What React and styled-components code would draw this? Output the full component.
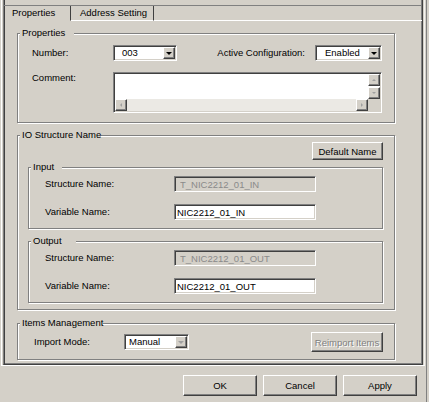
import React from 'react';
import styled, { createGlobalStyle, css } from 'styled-components';

const GlobalStyle = createGlobalStyle`
  html, body {
    margin: 0;
    padding: 0;
    background: #d4d0c8;
  }
  body {
    font-family: "Liberation Sans", Arial, sans-serif;
    font-size: 9.5px;
    color: #000;
  }
`;

const raised = css`
  border: 1px solid;
  border-color: #fff #404040 #404040 #fff;
  box-shadow: inset -1px -1px 0 #808080;
  background: #d4d0c8;
`;

const sunken = css`
  border: 1px solid;
  border-color: #808080 #fff #fff #808080;
  box-shadow: inset 1px 1px 0 #404040, inset -1px -1px 0 #d4d0c8;
`;

const triangle = (dir, size, color) => {
  const t = `${size}px solid transparent`;
  const c = `${size}px solid ${color}`;
  if (dir === 'up') return `border-left:${t};border-right:${t};border-bottom:${c};`;
  if (dir === 'down') return `border-left:${t};border-right:${t};border-top:${c};`;
  if (dir === 'left') return `border-top:${t};border-bottom:${t};border-right:${c};`;
  return `border-top:${t};border-bottom:${t};border-left:${c};`;
};

const Window = styled.div`
  width: 427px;
  height: 402px;
  box-sizing: border-box;
  border-right: 1px solid #808080;
  display: flex;
  flex-direction: column;
  background: #d4d0c8;
`;

const Sheet = styled.div`
  margin-left: 1px;
  width: 424px;
  box-sizing: border-box;
  display: flex;
  padding: 0 1px;
  border-left: 1px solid #fff;
  border-right: 1px solid #f4f3f0;
  border-bottom: 1px solid #fff;
`;

const Frame = styled.div`
  width: 420px;
  height: 365px;
  box-sizing: border-box;
  display: flex;
  flex-direction: column;
  border-left: 1px solid #808080;
  border-right: 1px solid #404040;
  border-bottom: 1px solid #404040;
  box-shadow: inset 1px 0 0 #404040, inset -1px 0 0 #808080, inset 0 -1px 0 #808080;
`;

const TabStrip = styled.div`
  margin-top: 5px;
  border-top: 1px solid #808080;
  display: flex;
  height: 15px;
`;

const Tab = styled.div`
  width: ${p => p.$w}px;
  height: 15px;
  box-sizing: border-box;
  padding-left: ${p => p.$pl}px;
  line-height: 14px;
  white-space: nowrap;
  border-right: 1px solid #404040;
  border-bottom: 1px solid ${p => (p.$active ? 'transparent' : '#fff')};
`;

const TabFiller = styled.div`
  flex: 1;
  border-bottom: 1px solid #fff;
`;

const Panel = styled.div`
  flex: 1;
  display: flex;
  flex-direction: column;
  align-items: flex-start;
  padding: 6px 0 0 13px;
`;

const GroupBox = styled.fieldset`
  margin: ${p => p.$mt || 0}px 0 0 0;
  width: ${p => (p.$w ? `${p.$w}px` : 'auto')};
  align-self: ${p => (p.$w ? 'flex-start' : 'stretch')};
  box-sizing: border-box;
  padding: ${p => `${p.$pt}px ${p.$pr}px ${p.$pb}px ${p.$pl}px`};
  border: 1px solid #808080;
  box-shadow: inset 1px 1px 0 #fff, 1px 1px 0 #fff;
  min-width: 0;

  & > legend {
    margin-left: ${p => 2 - p.$pl}px;
  }
`;

const Legend = styled.legend`
  padding: 0 ${p => p.$gap}px 0 2px;
  line-height: 12px;
  background: #d4d0c8;
  white-space: nowrap;
`;

const Row = styled.div`
  display: flex;
  align-items: ${p => p.$align || 'center'};
  height: ${p => (p.$h ? `${p.$h}px` : 'auto')};
  margin-top: ${p => p.$mt || 0}px;
  justify-content: ${p => p.$justify || 'flex-start'};
`;

const Spacer = styled.div`
  flex: 1;
`;

const Label = styled.span`
  flex-shrink: 0;
  width: ${p => (p.$w ? `${p.$w}px` : 'auto')};
  margin-right: ${p => p.$mr || 0}px;
  line-height: 12px;
  white-space: nowrap;
`;

const Combo = styled.div`
  width: ${p => p.$w}px;
  height: 16px;
  box-sizing: border-box;
  display: flex;
  align-items: center;
  padding: 1px 1px 1px ${p => p.$pl}px;
  background: #fff;
  ${sunken}
`;

const ComboValue = styled.span`
  flex: 1;
  line-height: 12px;
  white-space: nowrap;
`;

const DropButton = styled.span`
  width: 12px;
  height: 12px;
  box-sizing: border-box;
  display: flex;
  align-items: center;
  justify-content: center;
  ${raised}

  &::after {
    content: "";
    width: 0;
    height: 0;
    ${p => triangle('down', 3, p.$disabled ? '#a0a0a0' : '#000')}
  }
`;

const Field = styled.input`
  width: ${p => p.$w}px;
  height: 16px;
  box-sizing: border-box;
  margin: 0;
  padding: 0 0 0 ${p => p.$pl}px;
  font: inherit;
  outline: none;
  background: ${p => (p.disabled ? '#d4d0c8' : '#fff')};
  color: ${p => (p.disabled ? '#8a8a8a' : '#000')};
  -webkit-text-fill-color: ${p => (p.disabled ? '#8a8a8a' : '#000')};
  opacity: 1;
  ${sunken}
`;

const Memo = styled.div`
  width: ${p => p.$w}px;
  height: ${p => p.$h}px;
  box-sizing: border-box;
  padding: 1px;
  display: grid;
  grid-template-columns: 1fr 12px;
  grid-template-rows: 1fr 12px;
  background: #fff;
  ${sunken}
`;

const MemoText = styled.div`
  background: #fff;
`;

const VScroll = styled.div`
  display: flex;
  flex-direction: column;
  background: #fff;
`;

const HScroll = styled.div`
  display: flex;
  background: #ebe9e4;
`;

const Track = styled.div`
  flex: 1;
`;

const Corner = styled.div`
  background: #d4d0c8;
`;

const ScrollButton = styled.span`
  width: 12px;
  height: 12px;
  flex-shrink: 0;
  box-sizing: border-box;
  display: flex;
  align-items: center;
  justify-content: center;
  ${raised}

  &::after {
    content: "";
    width: 0;
    height: 0;
    ${p => triangle(p.$dir, 2, '#a0a0a0')}
  }
`;

const PushButton = styled.button`
  width: ${p => p.$w}px;
  height: ${p => p.$h}px;
  box-sizing: border-box;
  margin: 0;
  padding: 0;
  font: inherit;
  color: ${p => (p.disabled ? '#808080' : '#000')};
  text-shadow: ${p => (p.disabled ? '1px 1px 0 #fff' : 'none')};
  white-space: nowrap;
  ${raised}
`;

const ButtonBar = styled.div`
  display: flex;
  justify-content: flex-end;
  gap: 6px;
  padding: 9px 9px 0 0;
`;

const NameBox = ({ title, gap, mt, structure, variable }) => (
  <GroupBox $mt={mt} $pt={3} $pr={11} $pb={8} $pl={16}>
    <Legend $gap={gap}>{title}</Legend>
    <Row $h={16}>
      <Label $w={129}>Structure Name:</Label>
      <Field $w={142} $pl={5} value={structure} disabled readOnly />
    </Row>
    <Row $h={16} $mt={12}>
      <Label $w={129}>Variable Name:</Label>
      <Field $w={142} $pl={2} value={variable} readOnly />
    </Row>
  </GroupBox>
);

export default function App() {
  return (
    <>
      <GlobalStyle />
      <Window>
        <Sheet>
          <Frame>
            <TabStrip>
              <Tab $w={67} $pl={8} $active>Properties</Tab>
              <Tab $w={83} $pl={9}>Address Setting</Tab>
              <TabFiller />
            </TabStrip>
            <Panel>
              <GroupBox $w={378} $pt={6} $pr={12} $pb={9} $pl={14}>
                <Legend $gap={9}>Properties</Legend>
                <Row $h={16}>
                  <Label $w={81}>Number:</Label>
                  <Combo $w={64} $pl={8}>
                    <ComboValue>003</ComboValue>
                    <DropButton />
                  </Combo>
                  <Spacer />
                  <Label $mr={10}>Active Configuration:</Label>
                  <Combo $w={67} $pl={9}>
                    <ComboValue>Enabled</ComboValue>
                    <DropButton />
                  </Combo>
                </Row>
                <Row $mt={11} $align="flex-start">
                  <Label $w={81}>Comment:</Label>
                  <Memo $w={269} $h={41}>
                    <MemoText />
                    <VScroll>
                      <ScrollButton $dir="up" />
                      <Track />
                      <ScrollButton $dir="down" />
                    </VScroll>
                    <HScroll>
                      <ScrollButton $dir="left" />
                      <Track />
                      <ScrollButton $dir="right" />
                    </HScroll>
                    <Corner />
                  </Memo>
                </Row>
              </GroupBox>

              <GroupBox $w={378} $mt={6} $pt={1} $pr={11} $pb={6} $pl={10}>
                <Legend $gap={0}>IO Structure Name</Legend>
                <Row $justify="flex-end">
                  <PushButton $w={71} $h={18}>Default Name</PushButton>
                </Row>
                <NameBox
                  title="Input"
                  gap={8}
                  mt={1}
                  structure="T_NIC2212_01_IN"
                  variable="NIC2212_01_IN"
                />
                <NameBox
                  title="Output"
                  gap={14}
                  mt={6}
                  structure="T_NIC2212_01_OUT"
                  variable="NIC2212_01_OUT"
                />
              </GroupBox>

              <GroupBox $w={378} $mt={7} $pt={3} $pr={11} $pb={7} $pl={16}>
                <Legend $gap={0}>Items Management</Legend>
                <Row $h={20}>
                  <Label $w={90}>Import Mode:</Label>
                  <Combo $w={65} $pl={4}>
                    <ComboValue>Manual</ComboValue>
                    <DropButton $disabled />
                  </Combo>
                  <Spacer />
                  <PushButton $w={72} $h={20} disabled>Reimport Items</PushButton>
                </Row>
              </GroupBox>
            </Panel>
          </Frame>
        </Sheet>
        <ButtonBar>
          <PushButton $w={74} $h={21}>OK</PushButton>
          <PushButton $w={74} $h={21}>Cancel</PushButton>
          <PushButton $w={74} $h={21}>Apply</PushButton>
        </ButtonBar>
      </Window>
    </>
  );
}
